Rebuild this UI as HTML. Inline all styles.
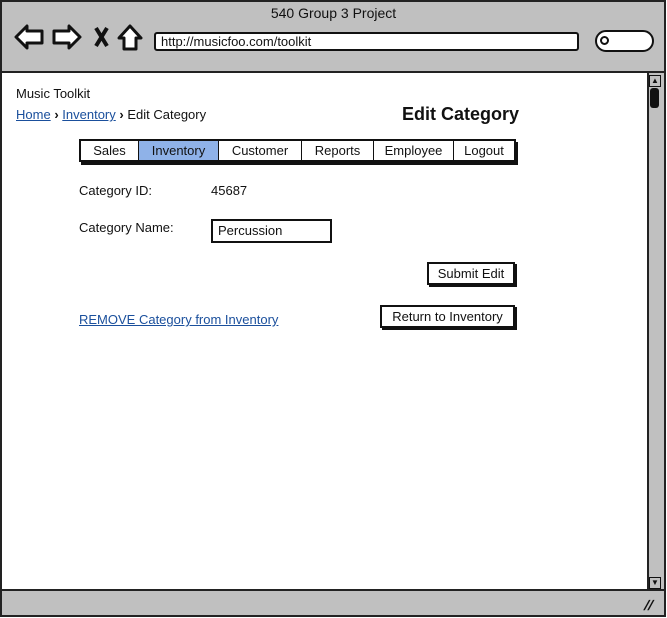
<!DOCTYPE html>
<html><head><style>
*{margin:0;padding:0;box-sizing:border-box}
body{width:667px;height:618px;background:#fff;font-family:"Liberation Sans",sans-serif;font-size:13px;color:#111;position:relative;overflow:hidden}
.a{position:absolute}
.btn{position:absolute;background:#fff;border:2px solid #111;box-shadow:2px 2px 0 #111;text-align:center;font-size:13px}
a{color:#1a4f9c;text-decoration:underline}
</style></head><body>
<div class="a" style="left:0;top:0;width:666px;height:617px;border:2px solid #222;background:#c0c0c0"></div>
<div class="a" style="left:2px;top:71px;width:663px;height:2px;background:#222"></div>
<div class="a" style="left:2px;top:73px;width:645px;height:516px;background:#fff"></div>
<div class="a" style="left:2px;top:589px;width:663px;height:2px;background:#222"></div>
<div class="a" style="left:0;top:5px;width:667px;text-align:center;font-size:14px">540 Group 3 Project</div>
<svg class="a" style="left:14px;top:22px" width="130" height="30" viewBox="0 0 130 30">
<g fill="#fff" stroke="#111" stroke-width="3" stroke-linejoin="round">
<path d="M2 15 L13 4 L13 9 L28 9 L28 21 L13 21 L13 26 Z"/>
<path d="M66 15 L55 4 L55 9 L40 9 L40 21 L55 21 L55 26 Z"/>
<path d="M105 16 L116 4 L127 16 L122 16 L122 27 L110 27 L110 16 Z"/>
</g>
<path d="M82 6 L93 24 M93 6 L82 24" stroke="#111" stroke-width="4"/>
</svg>
<div class="a" style="left:154px;top:32px;width:425px;height:19px;border:2px solid #111;border-radius:3px;background:#fff;font-size:13px;padding-left:5px;line-height:15px">http://musicfoo.com/toolkit</div>
<div class="a" style="left:595px;top:30px;width:59px;height:22px;border:2px solid #111;border-radius:11px;background:#fff"></div>
<div class="a" style="left:600px;top:36px;width:9px;height:9px;border:2px solid #111;border-radius:50%"></div>
<div class="a" style="left:647px;top:73px;width:2px;height:516px;background:#222"></div>
<div class="a" style="left:649px;top:75px;width:12px;height:12px;border:1px solid #111;font-size:8px;text-align:center;line-height:10px">▲</div>
<div class="a" style="left:650px;top:88px;width:9px;height:20px;background:#111;border-radius:3px"></div>
<div class="a" style="left:649px;top:577px;width:12px;height:12px;border:1px solid #111;font-size:8px;text-align:center;line-height:10px">▼</div>
<div class="a" style="left:645px;top:597px;font-size:14px;font-weight:bold;transform:skewX(-20deg)">//</div>
<div class="a" style="left:16px;top:86px">Music Toolkit</div>
<div class="a" style="left:16px;top:107px"><a>Home</a> <b>›</b> <a>Inventory</a> <b>›</b> Edit Category</div>
<div class="a" style="left:402px;top:104px;font-size:18px;font-weight:bold">Edit Category</div>
<div class="a" style="left:79px;top:139px;width:437px;height:23px;border:2px solid #111;box-shadow:2px 3px 0 #111;background:#fff;display:flex;font-size:13px;line-height:19px">
<div style="width:58px;text-align:center;border-right:1px solid #111">Sales</div>
<div style="width:80px;text-align:center;border-right:1px solid #111;background:#8fb2e8">Inventory</div>
<div style="width:83px;text-align:center;border-right:1px solid #111">Customer</div>
<div style="width:72px;text-align:center;border-right:1px solid #111">Reports</div>
<div style="width:80px;text-align:center;border-right:1px solid #111">Employee</div>
<div style="flex:1;text-align:center">Logout</div>
</div>
<div class="a" style="left:79px;top:183px">Category ID:</div>
<div class="a" style="left:211px;top:183px">45687</div>
<div class="a" style="left:79px;top:220px">Category Name:</div>
<div class="a" style="left:211px;top:219px;width:121px;height:24px;border:2px solid #111;background:#fff;padding-left:5px;line-height:20px">Percussion</div>
<div class="btn" style="left:427px;top:262px;width:88px;height:23px;line-height:19px">Submit Edit</div>
<div class="btn" style="left:380px;top:305px;width:135px;height:23px;line-height:19px">Return to Inventory</div>
<div class="a" style="left:79px;top:312px"><a>REMOVE Category from Inventory</a></div>
</body></html>
